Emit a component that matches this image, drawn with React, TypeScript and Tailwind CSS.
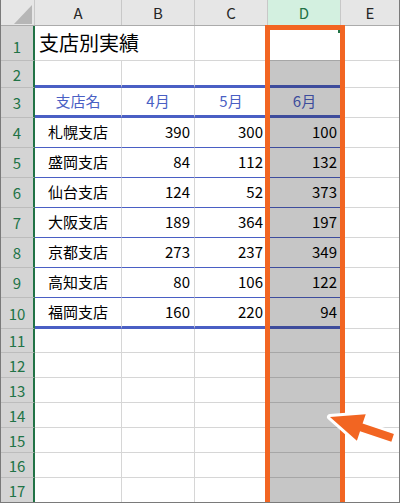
import React from "react";

type RowDef = {
  n: number;
  h: string;
  kind: "title" | "pre" | "head" | "body" | "bodyLast" | "empty" | "final";
  cells?: string[];
};

const rows: RowDef[] = [
  { n: 1, h: "h-[35px]", kind: "title", cells: ["支店別実績", "", "", ""] },
  { n: 2, h: "h-[27px]", kind: "pre" },
  { n: 3, h: "h-[30px]", kind: "head", cells: ["支店名", "4月", "5月", "6月"] },
  { n: 4, h: "h-[30px]", kind: "body", cells: ["札幌支店", "390", "300", "100"] },
  { n: 5, h: "h-[30px]", kind: "body", cells: ["盛岡支店", "84", "112", "132"] },
  { n: 6, h: "h-[30px]", kind: "body", cells: ["仙台支店", "124", "52", "373"] },
  { n: 7, h: "h-[30px]", kind: "body", cells: ["大阪支店", "189", "364", "197"] },
  { n: 8, h: "h-[30px]", kind: "body", cells: ["京都支店", "273", "237", "349"] },
  { n: 9, h: "h-[30px]", kind: "body", cells: ["高知支店", "80", "106", "122"] },
  { n: 10, h: "h-[31px]", kind: "bodyLast", cells: ["福岡支店", "160", "220", "94"] },
  { n: 11, h: "h-[24px]", kind: "empty" },
  { n: 12, h: "h-[25px]", kind: "empty" },
  { n: 13, h: "h-[25px]", kind: "empty" },
  { n: 14, h: "h-[25px]", kind: "empty" },
  { n: 15, h: "h-[25px]", kind: "empty" },
  { n: 16, h: "h-[25px]", kind: "empty" },
  { n: 17, h: "h-[24px]", kind: "final" },
];

// bottom border of columns A–C for each kind of row
const tableBorder = (kind: RowDef["kind"]) => {
  if (kind === "pre" || kind === "head" || kind === "bodyLast") return "border-b-[3px] border-b-[#4a5fc4]";
  if (kind === "body") return "border-b border-b-[#4a5fc4]";
  if (kind === "final") return "";
  return "border-b border-b-[#d6d6d6]";
};

// same for column D, which sits under the grey selection
const selBorder = (kind: RowDef["kind"]) => {
  if (kind === "pre" || kind === "head" || kind === "bodyLast") return "border-b-[3px] border-b-[#3d4c9c]";
  if (kind === "body") return "border-b border-b-[#3d4c9c]";
  if (kind === "final") return "";
  return "border-b border-b-[#a6a6a6]";
};

const SheetRow: React.FC<{ row: RowDef }> = ({ row }) => {
  const { n, h, kind, cells } = row;
  const tb = tableBorder(kind);
  const sb = selBorder(kind);
  const eb = kind === "final" ? "" : "border-b border-b-[#d6d6d6]";
  const isHead = kind === "head";
  const isBody = kind === "body" || kind === "bodyLast";

  return (
    <div className={`flex ${h}`}>
      <div
        className={`w-[34px] h-full flex items-center justify-center bg-[#d4d4d4] text-[#217346] text-[15px] border-r-2 border-r-[#217346] ${
          kind === "final" ? "" : "border-b border-b-[#bcbcbc]"
        } ${n === 1 ? "pt-[6px]" : ""}`}
      >
        {n}
      </div>

      {kind === "title" ? (
        <>
          <div className="w-[87px] h-full flex items-center pl-[4px] whitespace-nowrap text-[20px] text-black border-b border-b-[#d6d6d6]">
            {cells![0]}
          </div>
          <div className="w-[73px] h-full border-r border-r-[#d6d6d6] border-b border-b-[#d6d6d6]" />
          <div className="w-[73px] h-full border-r border-r-[#d6d6d6] border-b border-b-[#d6d6d6]" />
          <div className="w-[73px] h-full bg-white border-b border-b-[#a6a6a6]" />
        </>
      ) : (
        <>
          <div
            className={`w-[87px] h-full flex items-center justify-center pb-[2px] border-r border-r-[#d6d6d6] ${tb} ${
              isHead ? "text-[#4a5fc4]" : "text-black"
            }`}
          >
            {cells?.[0]}
          </div>
          {[1, 2].map((i) => (
            <div
              key={i}
              className={`w-[73px] h-full flex items-center pb-[2px] border-r border-r-[#d6d6d6] ${tb} ${
                isHead ? "justify-center text-[#4a5fc4]" : "justify-end pr-[4px] text-black"
              }`}
            >
              {cells?.[i]}
            </div>
          ))}
          <div
            className={`w-[73px] h-full flex items-center pb-[2px] bg-[#c6c6c6] ${sb} ${
              isHead ? "justify-center text-[#3d4c9c]" : isBody ? "justify-end pr-[4px] text-black" : ""
            }`}
          >
            {cells?.[3]}
          </div>
        </>
      )}

      <div className={`flex-1 h-full ${eb}`} />
    </div>
  );
};

const ArrowMark = () => (
  <svg className="absolute left-0 top-0 pointer-events-none" width="400" height="503" viewBox="0 0 400 503">
    <polygon
      transform="translate(329 417) rotate(18.4)"
      points="0,0 33,-14 33,-4 66,-4 66,4 33,4 33,14"
      fill="#f26522"
      stroke="#ffffff"
      strokeWidth="6"
      strokeLinejoin="round"
      paintOrder="stroke"
    />
  </svg>
);

const App: React.FC = () => {
  return (
    <div className="relative w-[400px] h-[503px] overflow-hidden bg-white border-x border-b border-[#7a7a7a] font-['Noto_Sans_CJK_JP','Noto_Sans',sans-serif] text-[15px] leading-none">
      {/* column headers */}
      <div className="flex h-[26px] bg-[#e6e6e6] border-b border-b-[#ababab] text-[#262626]">
        <div className="relative w-[34px] h-full border-r border-r-[#c8c8c8]">
          <svg className="absolute right-[2px] bottom-[1px]" width="18" height="19" viewBox="0 0 18 19">
            <polygon points="18,0 18,19 0,19" fill="#b6b6b6" />
          </svg>
        </div>
        <div className="w-[87px] flex items-center justify-center border-r border-r-[#c8c8c8]">A</div>
        <div className="w-[73px] flex items-center justify-center border-r border-r-[#c8c8c8]">B</div>
        <div className="w-[73px] flex items-center justify-center border-r border-r-[#c8c8c8]">C</div>
        <div className="w-[73px] flex items-center justify-center bg-[#d3f0e0] text-[#217346] border-r border-r-[#c8c8c8]">D</div>
        <div className="flex-1 flex items-center justify-center">E</div>
      </div>

      {rows.map((r) => (
        <SheetRow key={r.n} row={r} />
      ))}

      {/* selection frame around column D */}
      <div className="absolute left-[264px] top-[25px] w-[80px] h-[490px] border-[5px] border-b-0 border-[#f26522]" />
      <div className="absolute left-[337px] top-[30px] w-[2px] h-[3px] bg-[#217346]" />

      <ArrowMark />
    </div>
  );
};

export default App;
